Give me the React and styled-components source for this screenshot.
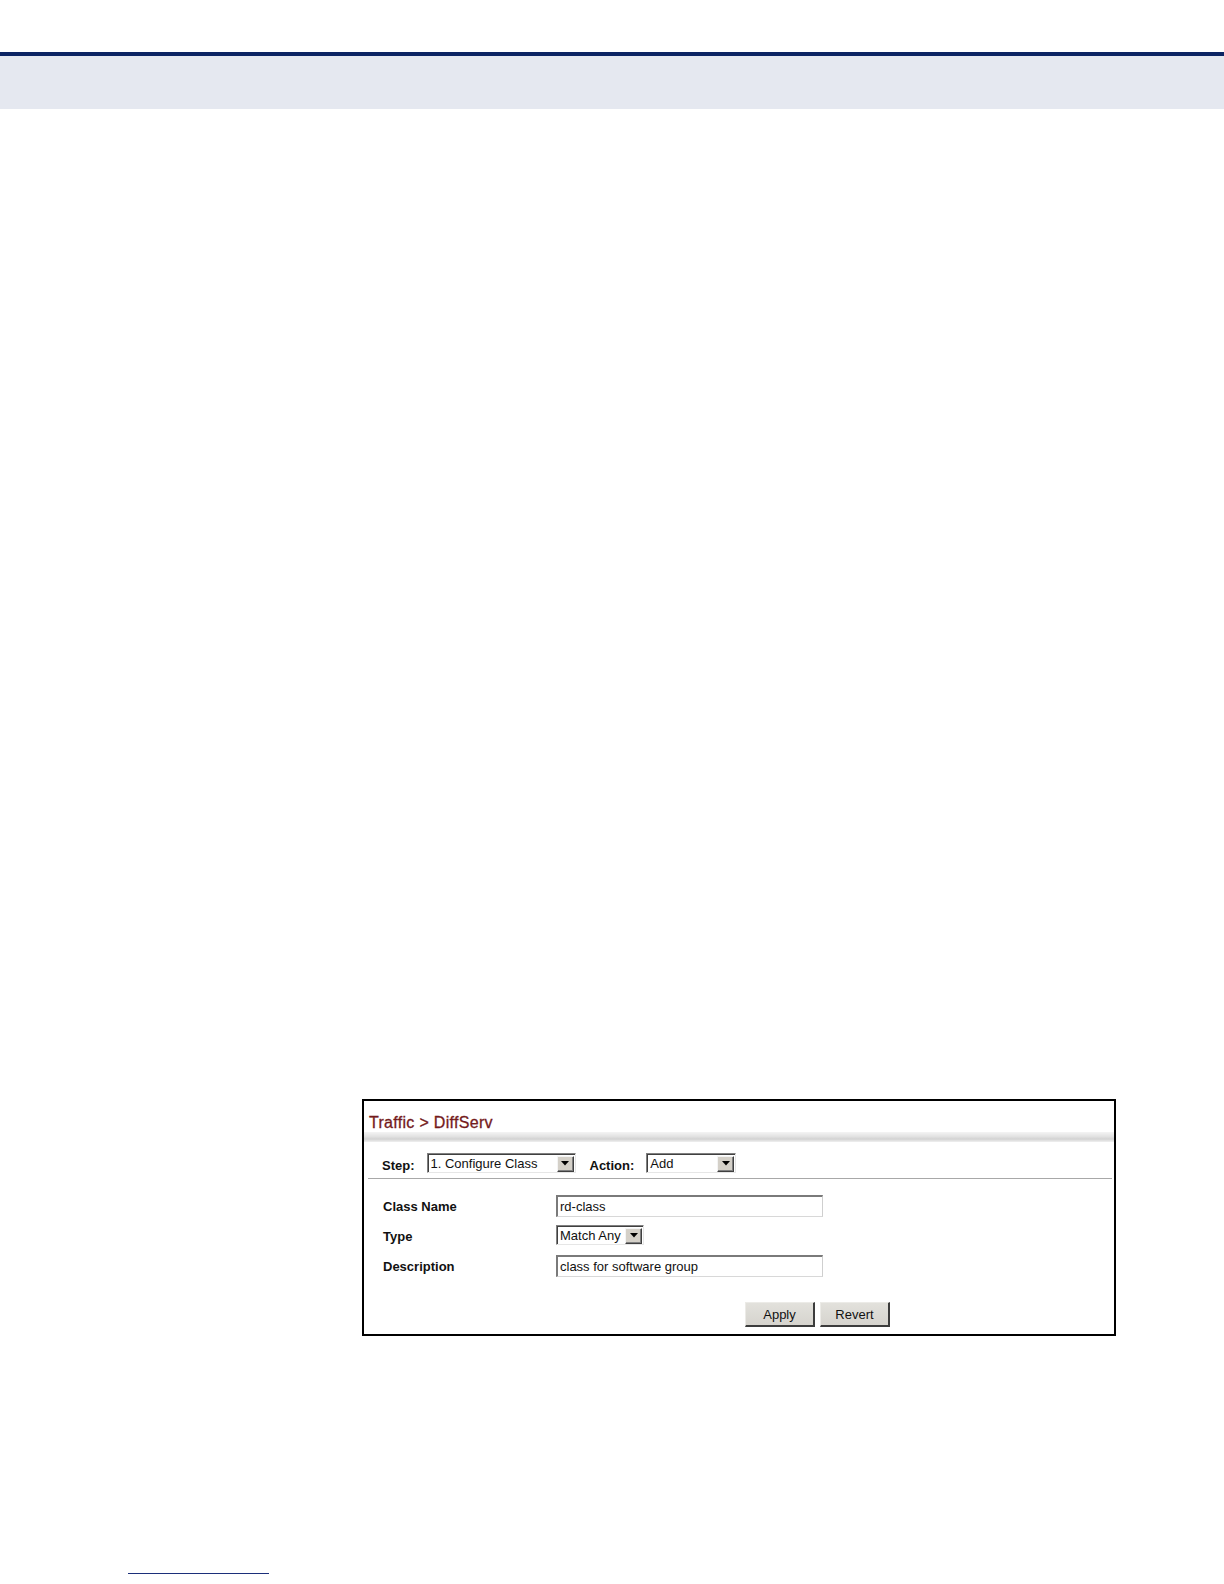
import React from 'react'
import styled, { createGlobalStyle } from 'styled-components'

const GlobalStyle = createGlobalStyle`
  html, body {
    margin: 0;
    padding: 0;
    background: #ffffff;
  }
  body {
    font-family: "Liberation Sans", Arial, sans-serif;
    color: #000;
  }
`

const Page = styled.div`
  width: 1224px;
  height: 1584px;
  padding-top: 52px;
  box-sizing: border-box;
  display: flex;
  flex-direction: column;
`

const HeaderRule = styled.div`
  height: 4px;
  background: #0c2463;
`

const HeaderBand = styled.div`
  height: 53px;
  background: #e5e8f0;
`

const Content = styled.div`
  padding-top: 990px;
  padding-left: 362px;
`

const Frame = styled.div`
  width: 754px;
  box-sizing: border-box;
  border: 2px solid #000;
  background: #fff;
  display: flex;
  flex-direction: column;
`

const Title = styled.div`
  height: 31px;
  box-sizing: border-box;
  padding: 13px 0 0 5px;
  font-size: 16px;
  line-height: 18px;
  letter-spacing: 0.3px;
  color: #741a1c;
  -webkit-text-stroke: 0.3px #741a1c;
`

const Shade = styled.div`
  height: 10px;
  background: linear-gradient(to bottom, #f4f4f4 0%, #e2e2e2 45%, #d2d2d2 70%, #f0f0f0 100%);
`

const StepRow = styled.div`
  display: flex;
  align-items: flex-end;
  height: 37px;
  box-sizing: border-box;
  padding: 12px 0 5px 14px;
  margin: 0 2px 0 4px;
  border-bottom: 1px solid #a8a8a8;
`

const StepLabel = styled.span`
  font-size: 13px;
  font-weight: bold;
  line-height: 15px;
  margin-right: ${(p) => p.gap}px;
  margin-left: ${(p) => p.lead || 0}px;
  color: #111;
`

const SelectBox = styled.div`
  width: ${(p) => p.w}px;
  height: 20px;
  box-sizing: border-box;
  display: flex;
  align-items: center;
  justify-content: space-between;
  border-top: 1px solid #808080;
  border-left: 1px solid #808080;
  border-right: 1px solid #e6e6e6;
  border-bottom: 1px solid #e6e6e6;
  box-shadow: inset 1px 1px 0 #404040;
  background: #fff;
  padding: 1px 1px 0 3px;
  font-size: 13px;
  line-height: 15px;
  color: #111;
`

const ArrowBtn = styled.div`
  width: 17px;
  height: 16px;
  box-sizing: border-box;
  background: #d4d0c8;
  border-style: solid;
  border-width: 1px;
  border-color: #f4f4f4 #404040 #404040 #f4f4f4;
  box-shadow: inset -1px -1px 0 #808080;
  display: flex;
  align-items: center;
  justify-content: center;
`

const Form = styled.div`
  display: grid;
  grid-template-columns: 173px 1fr;
  grid-auto-rows: 30px;
  padding: 16px 0 0 19px;
`

const Label = styled.div`
  font-size: 13px;
  font-weight: bold;
  line-height: 22px;
  padding-top: 1px;
  color: #111;
`

const TextBox = styled.div`
  width: 267px;
  height: 22px;
  box-sizing: border-box;
  border-top: 2px solid #7a7a7a;
  border-left: 2px solid #7a7a7a;
  border-right: 1px solid #cfcfcf;
  border-bottom: 1px solid #d8d8d8;
  padding: 2px 0 0 2px;
  font-size: 13px;
  line-height: 15px;
  color: #111;
`

const Actions = styled.div`
  display: flex;
  gap: 5px;
  padding: 17px 0 7px 381px;
`

const Button = styled.div`
  width: 70px;
  height: 25px;
  box-sizing: border-box;
  display: flex;
  align-items: center;
  justify-content: center;
  background: linear-gradient(to bottom, #e2e1dc, #d6d4ce);
  border-style: solid;
  border-width: 1px 2px 2px 1px;
  border-color: #ecebe7 #3c3c3c #3c3c3c #ecebe7;
  font-size: 13px;
  color: #111;
`

const FootRule = styled.div`
  margin: 237px 0 0 128px;
  width: 141px;
  height: 1px;
  background: #1c2f7a;
`

const Arrow = () => (
  <svg width="8" height="5" viewBox="0 0 8 5">
    <polygon points="0,0 8,0 4,4.5" fill="#000" />
  </svg>
)

const Select = ({ w, value }) => (
  <SelectBox w={w}>
    <span>{value}</span>
    <ArrowBtn>
      <Arrow />
    </ArrowBtn>
  </SelectBox>
)

export default function App() {
  return (
    <Page>
      <GlobalStyle />
      <HeaderRule />
      <HeaderBand />
      <Content>
        <Frame>
          <Title>Traffic &gt; DiffServ</Title>
          <Shade />
          <StepRow>
            <StepLabel gap={12}>Step:</StepLabel>
            <Select w={149} value="1. Configure Class" />
            <StepLabel lead={14} gap={12}>Action:</StepLabel>
            <Select w={90} value="Add" />
          </StepRow>
          <Form>
            <Label>Class Name</Label>
            <TextBox>rd-class</TextBox>
            <Label>Type</Label>
            <Select w={88} value="Match Any" />
            <Label>Description</Label>
            <TextBox>class for software group</TextBox>
          </Form>
          <Actions>
            <Button>Apply</Button>
            <Button>Revert</Button>
          </Actions>
        </Frame>
      </Content>
      <FootRule />
    </Page>
  )
}
